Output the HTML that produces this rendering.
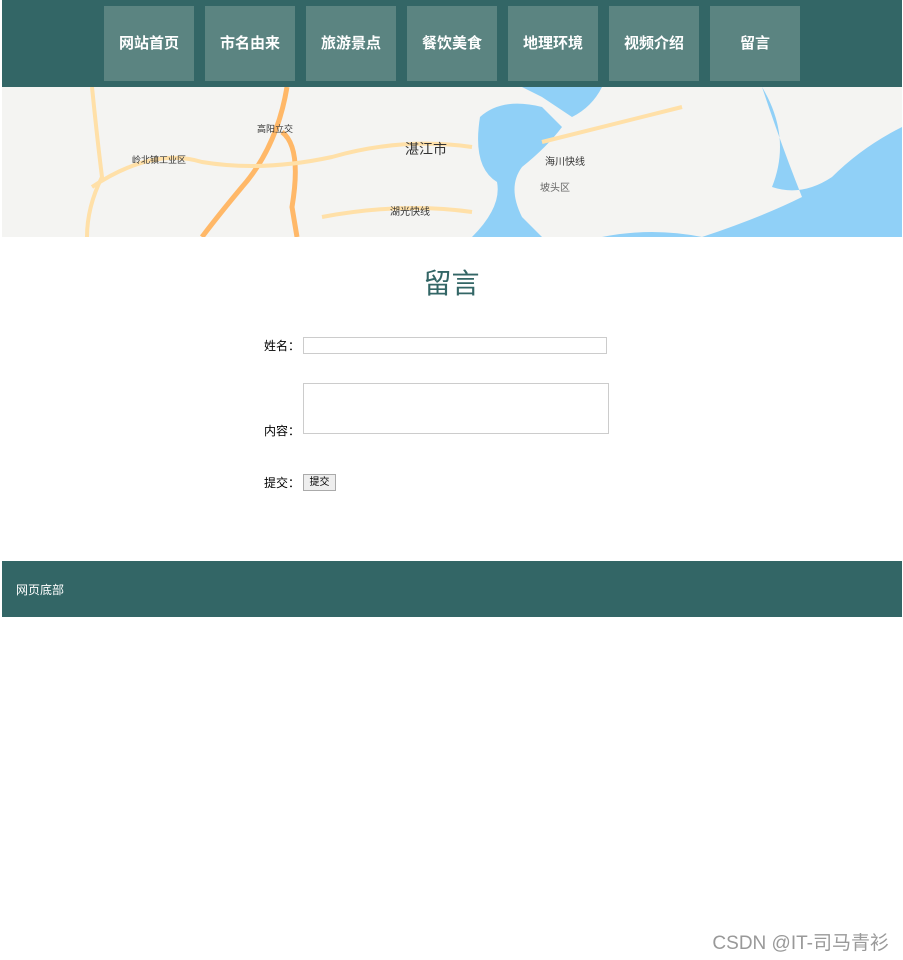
<!DOCTYPE html>
<html><head><meta charset="utf-8"><style>
body{margin:0;background:#fff;font-family:"Liberation Sans","Noto Sans CJK SC",sans-serif;}
.wrap{position:absolute;left:2px;top:0;width:900px;}
.nav{height:87px;background:#336666;position:relative;}
.nav a{position:absolute;top:6px;width:90px;height:75px;background:#5b8481;color:#fff;font-weight:bold;font-size:15px;line-height:75px;text-align:center;text-decoration:none;}
.map{height:150px;position:relative;overflow:hidden;background:#f4f4f2;}
h1{position:absolute;top:262px;left:0;width:903px;text-align:center;margin:0;font-weight:normal;font-size:28px;color:#336666;}
.lbl{position:absolute;font-size:12px;color:#000;left:264px;}
.foot{position:absolute;left:2px;top:561px;width:900px;height:56px;background:#336666;color:#fff;font-size:12px;line-height:58px;}
.foot span{margin-left:14px}
.wm{position:absolute;right:14px;top:928px;font-size:19px;color:#999;}
</style></head><body>
<div class="wrap">
<div class="nav">
<a style="left:102px">网站首页</a><a style="left:203px">市名由来</a><a style="left:304px">旅游景点</a><a style="left:405px">餐饮美食</a><a style="left:506px">地理环境</a><a style="left:607px">视频介绍</a><a style="left:708px">留言</a>
</div>
<div class="map"><svg width="900" height="150" style="position:absolute;left:0;top:0">
<path d="M478 30 Q500 10 540 20 L560 40 Q545 60 520 80 Q505 100 520 130 L540 150 L470 150 Q500 120 495 95 Q470 80 478 30Z" fill="#90d0f7"/>
<path d="M520 0 L600 0 Q590 20 570 30 Q555 20 540 10Z" fill="#90d0f7"/>
<path d="M760 0 Q790 50 770 100 Q800 110 830 90 Q860 60 900 40 L900 150 L600 150 Q650 140 700 150 Q760 130 800 110 Q780 60 760 0Z" fill="#90d0f7"/>
<path d="M285 0 Q275 60 240 100 Q215 130 200 150" stroke="#ffb868" stroke-width="5" fill="none"/>
<path d="M280 45 Q300 60 290 120 L295 150" stroke="#ffb868" stroke-width="5" fill="none"/>
<path d="M90 100 Q150 60 200 75 Q260 85 330 70 Q400 50 470 60" stroke="#ffe0a8" stroke-width="4" fill="none"/>
<path d="M320 130 Q400 115 470 125" stroke="#ffe0a8" stroke-width="4" fill="none"/>
<path d="M540 55 Q600 40 680 20" stroke="#ffe0a8" stroke-width="4" fill="none"/>
<path d="M90 0 Q95 50 100 90 Q85 120 85 150" stroke="#ffe0a8" stroke-width="4" fill="none"/>
<text x="403" y="67" font-size="14" fill="#333" font-family="Liberation Sans,Noto Sans CJK SC,sans-serif">湛江市</text>
<text x="255" y="45" font-size="9" fill="#333" font-family="Noto Sans CJK SC,sans-serif">高阳立交</text>
<text x="543" y="78" font-size="10" fill="#333" font-family="Noto Sans CJK SC,sans-serif">海川快线</text>
<text x="538" y="104" font-size="10" fill="#666" font-family="Noto Sans CJK SC,sans-serif">坡头区</text>
<text x="388" y="128" font-size="10" fill="#333" font-family="Noto Sans CJK SC,sans-serif">湖光快线</text>
<text x="130" y="76" font-size="9" fill="#333" font-family="Noto Sans CJK SC,sans-serif">岭北镇工业区</text>
</svg></div>
</div>
<h1>留言</h1>
<div class="lbl" style="top:337px">姓名：</div>
<div style="position:absolute;left:303px;top:337px;width:302px;height:15px;border:1px solid #ccc"></div>
<div class="lbl" style="top:422px">内容：</div>
<div style="position:absolute;left:303px;top:383px;width:304px;height:49px;border:1px solid #ccc"></div>
<div class="lbl" style="top:474px">提交：</div>
<div style="position:absolute;left:303px;top:474px;width:31px;height:15px;border:1px solid #aaa;background:#eee;font-size:10px;text-align:center;line-height:15px">提交</div>
<div class="foot"><span>网页底部</span></div>
<div class="wm">CSDN @IT-司马青衫</div>
</body></html>
